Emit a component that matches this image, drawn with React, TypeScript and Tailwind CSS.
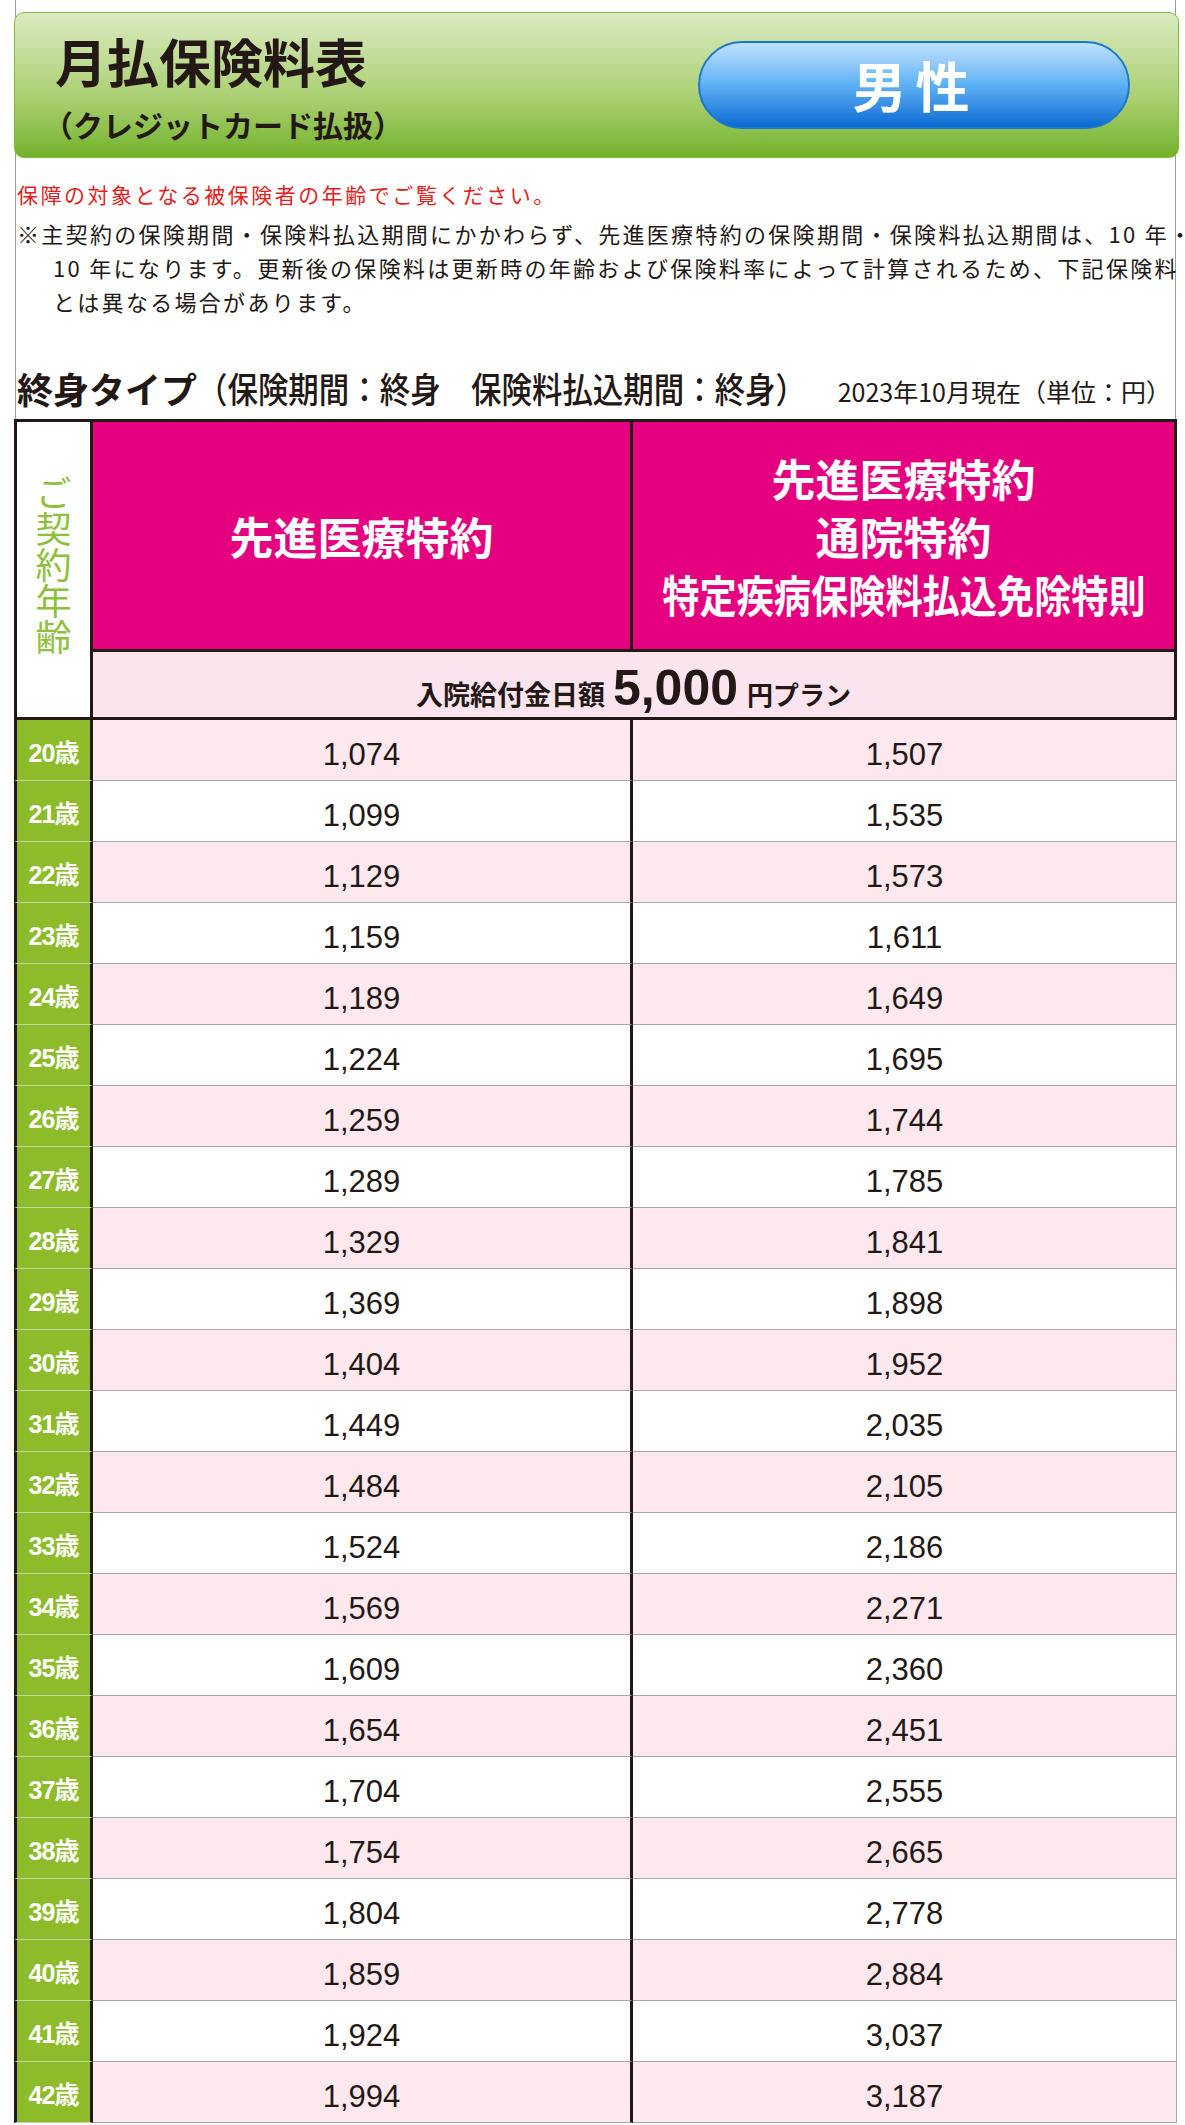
import React from "react";

const rows: [number, string, string][] = [
  [20, "1,074", "1,507"],
  [21, "1,099", "1,535"],
  [22, "1,129", "1,573"],
  [23, "1,159", "1,611"],
  [24, "1,189", "1,649"],
  [25, "1,224", "1,695"],
  [26, "1,259", "1,744"],
  [27, "1,289", "1,785"],
  [28, "1,329", "1,841"],
  [29, "1,369", "1,898"],
  [30, "1,404", "1,952"],
  [31, "1,449", "2,035"],
  [32, "1,484", "2,105"],
  [33, "1,524", "2,186"],
  [34, "1,569", "2,271"],
  [35, "1,609", "2,360"],
  [36, "1,654", "2,451"],
  [37, "1,704", "2,555"],
  [38, "1,754", "2,665"],
  [39, "1,804", "2,778"],
  [40, "1,859", "2,884"],
  [41, "1,924", "3,037"],
  [42, "1,994", "3,187"],
];

export default function App() {
  return (
    <div className="w-[1185px] min-h-[2125px] bg-white overflow-hidden font-['Noto_Sans_CJK_JP',sans-serif] text-[#231815]">
      {/* top section */}
      <div className="ml-[15px] w-[1161px] border-x border-[#9d9d9d] pt-[12px] pb-[7px]">
        {/* green header */}
        <div className="-ml-[2px] w-[1165px] h-[146px] rounded-[10px] border border-[#86bc3c] bg-linear-to-b from-[#dbeac0] via-[#a9cf6f] via-60% to-[#74b227] flex items-start">
          <div className="pl-[28px] flex flex-col">
            <div className="ml-[12px] mt-[22px] text-[52px] leading-[52px] font-bold whitespace-nowrap">
              月払保険料表
            </div>
            <div className="mt-[19px] text-[30px] leading-[36px] font-bold whitespace-nowrap">
              （クレジットカード払扱）
            </div>
          </div>
          <div className="ml-auto mr-[48px] mt-[28px] w-[432px] h-[88px] rounded-full border-2 border-[#1b78d0] bg-linear-to-b from-[#c0e1fd] via-[#5cb1f4] to-[#0669d3] flex items-center justify-center">
            <span className="text-white font-bold text-[54px] leading-none tracking-[9px] pl-[3px]">
              男性
            </span>
          </div>
        </div>

        {/* red notice */}
        <p className="mt-[19px] pl-[1px] text-[21px] leading-[34px] tracking-[2.5px] text-[#e3211c] whitespace-nowrap">
          保障の対象となる被保険者の年齢でご覧ください。
        </p>
        {/* notes */}
        <div className="mt-[5px] text-[22px] leading-[34px] tracking-[2.3px] text-[#231815]">
          <p className="whitespace-nowrap pl-[1px]">
            ※主契約の保険期間・保険料払込期間にかかわらず、先進医療特約の保険期間・保険料払込期間は、10 年・
          </p>
          <p className="whitespace-nowrap pl-[37px]">
            10 年になります。更新後の保険料は更新時の年齢および保険料率によって計算されるため、下記保険料
          </p>
          <p className="whitespace-nowrap pl-[37px]">とは異なる場合があります。</p>
        </div>

        {/* section title */}
        <div className="mt-[46px] h-[48px] flex items-center whitespace-nowrap">
          <span className="shrink-0 pl-[1px] text-[36px] leading-[48px] font-bold">終身タイプ</span>
          <div className="shrink-0 w-[600px] h-[48px]">
            <span className="inline-block origin-left scale-x-[0.87] text-[35px] leading-[48px] font-medium">
              （保険期間：終身　保険料払込期間：終身）
            </span>
          </div>
          <span className="ml-auto mr-[4px] mt-[6px] text-[25px] leading-[32px]">
            2023年10月現在（単位：円）
          </span>
        </div>
      </div>

      {/* table */}
      <div className="ml-[14px] w-[1163px]">
        {/* header */}
        <div className="flex h-[301px] border-[3px] border-[#231815]">
          <div className="shrink-0 w-[76px] border-r-[3px] border-[#231815] bg-white flex items-center justify-center">
            <span className="[writing-mode:vertical-rl] text-[36px] leading-none text-[#8dc13b] mb-[10px]">
              ご契約年齢
            </span>
          </div>
          <div className="flex-1 min-w-0 flex flex-col">
            <div className="h-[230px] flex bg-[#e4007f] text-white font-bold border-b-[3px] border-[#231815]">
              <div className="shrink-0 w-[540px] border-r-[3px] border-[#231815] flex items-center justify-center text-[44px] leading-none">
                先進医療特約
              </div>
              <div className="flex-1 min-w-0 flex flex-col items-center justify-center text-[44px] leading-[58px] whitespace-nowrap">
                <span>先進医療特約</span>
                <span>通院特約</span>
                <div className="w-full h-[58px] flex justify-center">
                  <span className="shrink-0 inline-block scale-x-[0.845]">特定疾病保険料払込免除特則</span>
                </div>
              </div>
            </div>
            <div className="flex-1 bg-[#fbe4ed] flex items-center justify-center">
              <div className="flex items-baseline font-bold whitespace-nowrap pt-[6px]">
                <span className="text-[27px] leading-none">入院給付金日額</span>
                <span className="ml-[8px] font-['Liberation_Sans',Arial,sans-serif] text-[50px] leading-none">
                  5,000
                </span>
                <span className="ml-[9px] text-[26px] leading-none">円プラン</span>
              </div>
            </div>
          </div>
        </div>

        {/* rows */}
        {rows.map(([age, a, b], i) => {
          const bg = i % 2 === 0 ? "bg-[#fde8ee]" : "bg-white";
          return (
            <div key={age} className="flex h-[61px]">
              <div className="shrink-0 w-[79px] border-l-[3px] border-r-[3px] border-l-[#231815] border-r-[#231815] border-b border-b-[#c3d79c] bg-[#8dbb2a] flex items-center justify-center pt-[6px]">
                <span className="text-white font-bold text-[25px] leading-none font-['Liberation_Sans','Noto_Sans_CJK_JP',sans-serif] tracking-[-1px]">
                  {age}歳
                </span>
              </div>
              <div className={`shrink-0 w-[540px] border-r-[3px] border-r-[#231815] border-b border-b-[#a8a8a8] ${bg} flex items-center justify-center pt-[8px]`}>
                <span className="font-['Liberation_Sans',Arial,sans-serif] text-[31px] leading-none">{a}</span>
              </div>
              <div className={`flex-1 min-w-0 border-r border-r-[#a8a8a8] border-b border-b-[#a8a8a8] ${bg} flex items-center justify-center pt-[8px]`}>
                <span className="font-['Liberation_Sans',Arial,sans-serif] text-[31px] leading-none">{b}</span>
              </div>
            </div>
          );
        })}
      </div>
    </div>
  );
}
